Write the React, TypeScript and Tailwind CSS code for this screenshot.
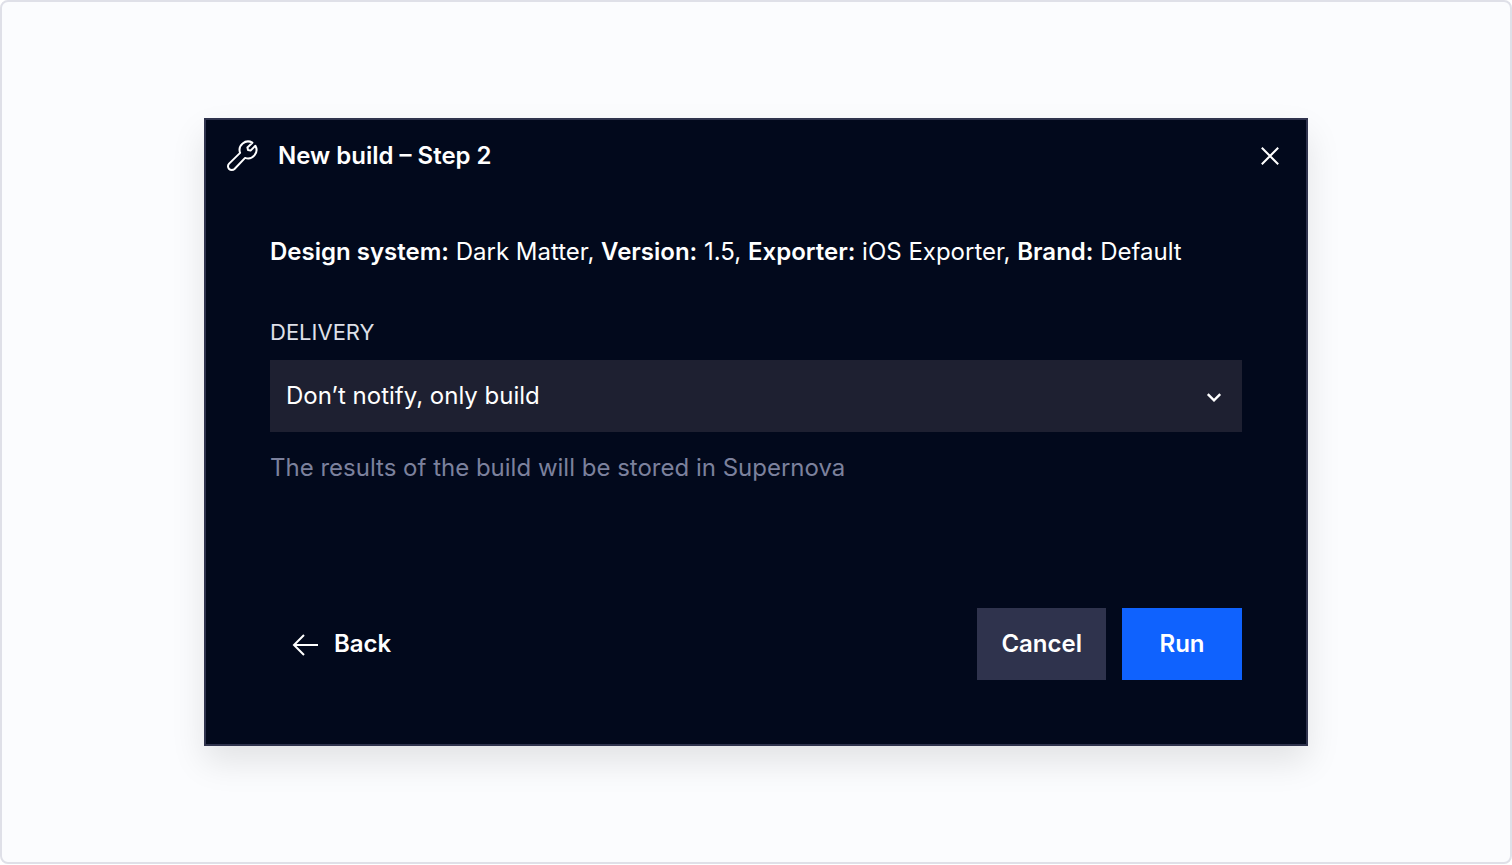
import { useState } from "react";

const BUILD_INFO = [
  { label: "Design system", value: "Dark Matter" },
  { label: "Version", value: "1.5" },
  { label: "Exporter", value: "iOS Exporter" },
  { label: "Brand", value: "Default" },
];

const DELIVERY = [{ key: "none", label: "Don’t notify, only build", hint: "The results of the build will be stored in Supernova" }];

function WrenchIcon() {
  return (
    <svg viewBox="0 0 32 32" className="size-8" fill="none" stroke="currentColor" strokeWidth="2" strokeLinejoin="round" aria-hidden="true">
      <path d="M26.4 2.7A8.5 8.5 0 0 0 14.1 12.9L3.1 23.6A3.8 3.8 0 0 0 8.5 29L19.1 17.9A8.5 8.5 0 0 0 29.4 5.8L24.6 10.6L22 10L21.4 7.4Z" />
    </svg>
  );
}

function CloseIcon() {
  return (
    <svg viewBox="0 0 32 32" className="size-8" fill="none" stroke="currentColor" strokeWidth="2" aria-hidden="true">
      <path d="M7.8 7.8L24.2 24.2M24.2 7.8L7.8 24.2" />
    </svg>
  );
}

function ArrowLeftIcon() {
  return (
    <svg viewBox="0 0 32 32" className="size-8" fill="none" stroke="currentColor" strokeWidth="2" aria-hidden="true">
      <path d="M28 17H4M14 7L4 17L14 27" />
    </svg>
  );
}

function ChevronIcon() {
  return (
    <svg viewBox="0 0 24 24" className="pointer-events-none absolute right-4 top-6 size-6" fill="none" stroke="currentColor" strokeWidth="2.4" aria-hidden="true">
      <path d="M5.8 10.2L12 16.4L18.2 10.2" />
    </svg>
  );
}

export default function App() {
  const [delivery, setDelivery] = useState("none");
  const current = DELIVERY.find((d) => d.key === delivery);

  return (
    <main className="flex min-h-[864px] items-center justify-center rounded-lg border-2 border-[#dfe0e8] bg-[#fbfcfe] px-8 font-['Inter',sans-serif] text-2xl text-white">
      <section role="dialog" aria-labelledby="build-title" className="w-full max-w-[1104px] border-2 border-[#2f334d] bg-[#02091c] shadow-[0_16px_32px_rgba(0,0,0,0.1)]">
        <header className="flex h-18 items-center gap-5 px-5">
          <WrenchIcon />
          <h1 id="build-title" className="flex-1 font-semibold">New build – Step 2</h1>
          <button type="button" aria-label="Close">
            <CloseIcon />
          </button>
        </header>

        <form className="px-16 pt-11 pb-16" onSubmit={(e) => e.preventDefault()}>
          <p>
            {BUILD_INFO.map((item, i) => (
              <span key={item.label}>
                <strong className="font-semibold">{item.label}:</strong> {item.value}
                {i < BUILD_INFO.length - 1 && ", "}
              </span>
            ))}
          </p>

          <label htmlFor="delivery" className="mt-12 block text-[22px] leading-8 text-[#dfe0e8]">DELIVERY</label>
          <div className="relative mt-3">
            <select
              id="delivery"
              value={delivery}
              onChange={(e) => setDelivery(e.target.value)}
              className="h-18 w-full appearance-none bg-[#1e2031] px-4"
            >
              {DELIVERY.map((d) => (
                <option key={d.key} value={d.key}>{d.label}</option>
              ))}
            </select>
            <ChevronIcon />
          </div>
          <p className="mt-5 text-[#7c819d]">{current?.hint}</p>

          <div className="mt-31 flex items-center gap-4">
            <button type="button" className="mr-auto flex h-18 items-center gap-3 px-5 font-semibold">
              <ArrowLeftIcon />
              Back
            </button>
            <button type="button" className="h-18 bg-[#2f334d] px-6 font-semibold">Cancel</button>
            <button type="submit" className="h-18 w-30 bg-[#0f62fe] font-semibold">Run</button>
          </div>
        </form>
      </section>
    </main>
  );
}
